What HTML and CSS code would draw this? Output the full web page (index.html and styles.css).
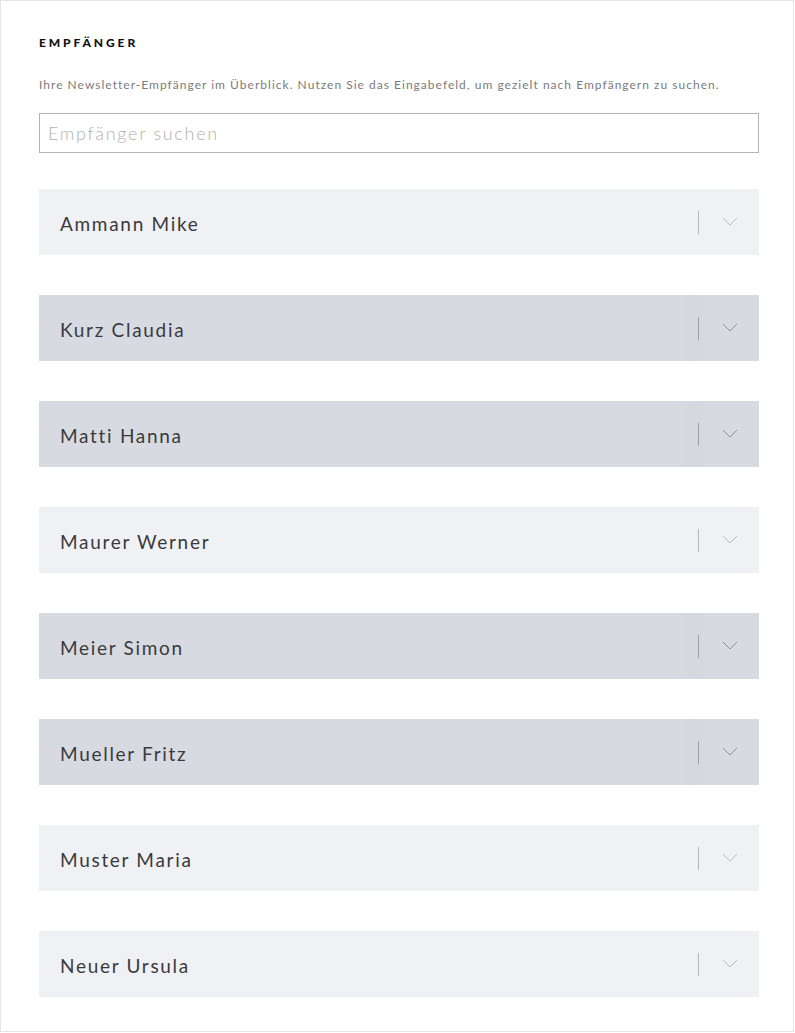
FILE: index.html
```html
<!DOCTYPE html>
<html lang="de">
<head>
<meta charset="utf-8">
<title>Empfänger</title>
<link rel="stylesheet" href="styles.css">
</head>
<body>
<div class="frame">
  <h2 class="title">EMPFÄNGER</h2>
  <p class="desc">Ihre Newsletter-Empfänger im Überblick. Nutzen Sie das Eingabefeld, um gezielt nach Empfängern zu suchen.</p>
  <input class="search" type="text" placeholder="Empfänger suchen">
  <ul class="list">
    <li class="row light"><span class="name">Ammann Mike</span><span class="ctrl"><span class="sep"></span><svg class="chev" width="16" height="9" viewBox="0 0 16 9"><path d="M1 1 L8 8 L15 1" fill="none" stroke="currentColor" stroke-width="1"/></svg></span></li>
    <li class="row dark"><span class="name">Kurz Claudia</span><span class="ctrl"><span class="sep"></span><svg class="chev" width="16" height="9" viewBox="0 0 16 9"><path d="M1 1 L8 8 L15 1" fill="none" stroke="currentColor" stroke-width="1"/></svg></span></li>
    <li class="row dark"><span class="name">Matti Hanna</span><span class="ctrl"><span class="sep"></span><svg class="chev" width="16" height="9" viewBox="0 0 16 9"><path d="M1 1 L8 8 L15 1" fill="none" stroke="currentColor" stroke-width="1"/></svg></span></li>
    <li class="row light"><span class="name">Maurer Werner</span><span class="ctrl"><span class="sep"></span><svg class="chev" width="16" height="9" viewBox="0 0 16 9"><path d="M1 1 L8 8 L15 1" fill="none" stroke="currentColor" stroke-width="1"/></svg></span></li>
    <li class="row dark"><span class="name">Meier Simon</span><span class="ctrl"><span class="sep"></span><svg class="chev" width="16" height="9" viewBox="0 0 16 9"><path d="M1 1 L8 8 L15 1" fill="none" stroke="currentColor" stroke-width="1"/></svg></span></li>
    <li class="row dark"><span class="name">Mueller Fritz</span><span class="ctrl"><span class="sep"></span><svg class="chev" width="16" height="9" viewBox="0 0 16 9"><path d="M1 1 L8 8 L15 1" fill="none" stroke="currentColor" stroke-width="1"/></svg></span></li>
    <li class="row light"><span class="name">Muster Maria</span><span class="ctrl"><span class="sep"></span><svg class="chev" width="16" height="9" viewBox="0 0 16 9"><path d="M1 1 L8 8 L15 1" fill="none" stroke="currentColor" stroke-width="1"/></svg></span></li>
    <li class="row light"><span class="name">Neuer Ursula</span><span class="ctrl"><span class="sep"></span><svg class="chev" width="16" height="9" viewBox="0 0 16 9"><path d="M1 1 L8 8 L15 1" fill="none" stroke="currentColor" stroke-width="1"/></svg></span></li>
  </ul>
</div>
</body>
</html>
```
FILE: styles.css
```css
html, body {
  margin: 0;
  padding: 0;
  background: #ffffff;
}
body {
  font-family: "Lato", "Open Sans", "Liberation Sans", sans-serif;
  color: #333;
}
.frame {
  box-sizing: border-box;
  width: 794px;
  height: 1032px;
  border: 1px solid #e6e6ea;
  padding: 35px 35px 0 38px;
}
.title {
  margin: 0;
  font-size: 12px;
  font-weight: 900;
  letter-spacing: 2.9px;
  color: #111;
  line-height: 14px;
}
.desc {
  margin: 27px 0 0 0;
  font-size: 12px;
  line-height: 16px;
  color: #7b7b7b;
  letter-spacing: 1.02px;
  white-space: nowrap;
}
.search {
  display: block;
  box-sizing: border-box;
  width: 720px;
  height: 40px;
  margin-top: 20px;
  padding: 0 8px;
  border: 1px solid #b3b3b3;
  border-radius: 0;
  font-family: inherit;
  font-size: 18px;
  font-weight: 300;
  color: #333;
  outline: none;
}
.search::placeholder {
  color: #b1b1b1;
  letter-spacing: 1.7px;
}
.list {
  list-style: none;
  margin: 36px 0 0 0;
  padding: 0;
  display: flex;
  flex-direction: column;
  gap: 40px;
  width: 720px;
}
.row {
  height: 66px;
  display: flex;
  align-items: center;
  justify-content: space-between;
  padding-left: 21px;
}
.row.light { background: #f0f1f5; }
.row.dark {
  background: linear-gradient(to right, #d8dae2 0, #d8dae2 644px, #d6d8e0 644px, #d6d8e0 664px, #d8dae2 664px);
}
.name {
  font-size: 19px;
  letter-spacing: 1.7px;
  color: #3a3a3c;
  padding-top: 3px;
}
.ctrl {
  display: flex;
  align-items: center;
  width: 61px;
  height: 66px;
}
.sep {
  width: 1px;
  height: 23px;
  background: #b4b6bc;
  margin-right: 23px;
  margin-top: 1px;
}
.chev {
  color: #b8bac0;
  margin-top: -2px;
}
.row.dark .chev { color: #8e9096; }
.row.dark .sep { background: #9ea0a6; }
```
